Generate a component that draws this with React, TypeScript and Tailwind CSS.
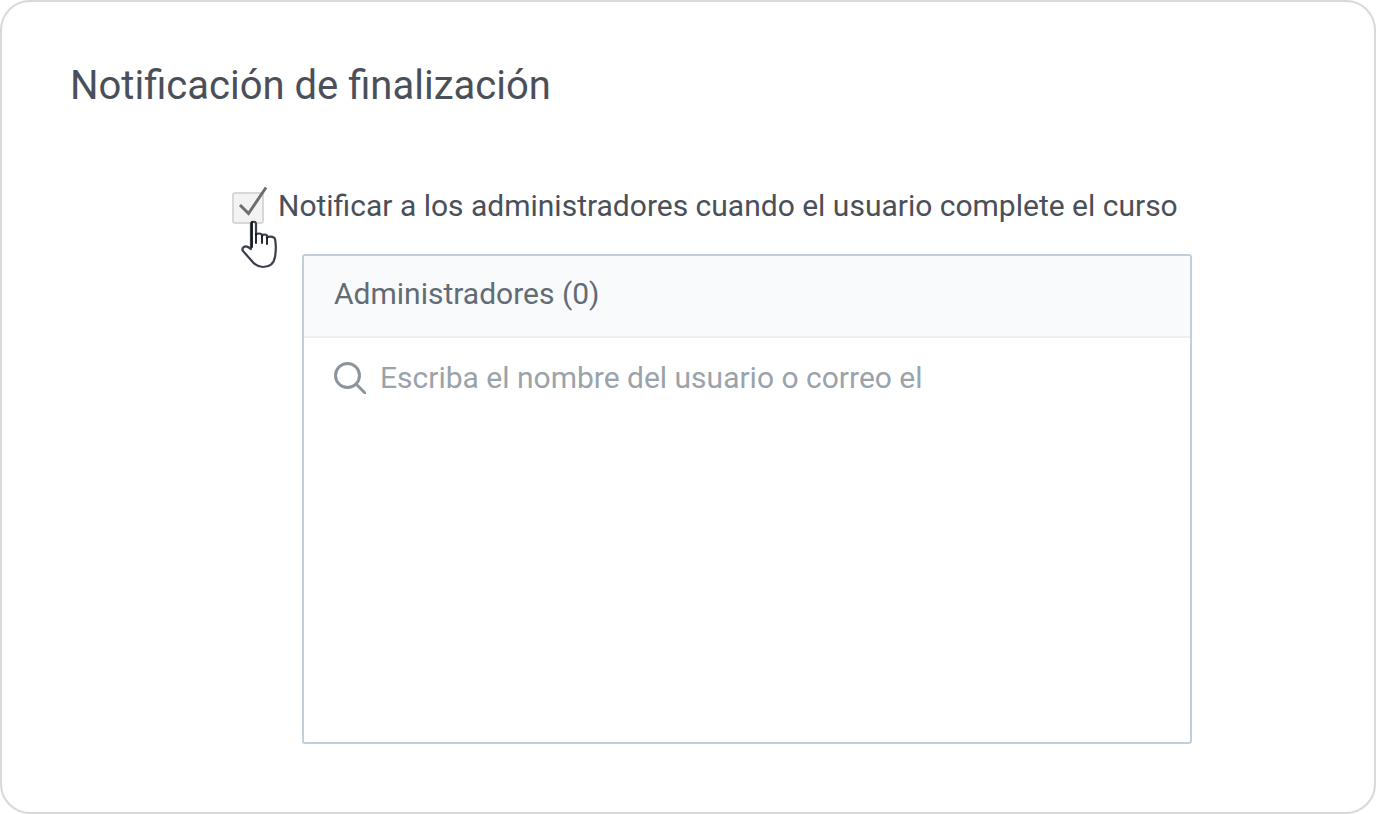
function HandCursor() {
  return (
    <svg width="38" height="50" viewBox="0 0 38 50" fill="none" className="absolute left-[238px] top-[218px]">
      <path
        d="M11 28V4c0-3 5-3 5 0v11c0-2 6-2 6 0v1c0-2 5-2 5 0v2c0-2 7-2 8 1 1 5 1 12 0 18-1 6-5 10-12 10-6 0-9-3-12-7l-8-9c-2-3 2-6 5-4l3 2"
        stroke="#3a3f4b"
        strokeWidth="2.200"
        strokeLinecap="round"
        strokeLinejoin="round"
        fill="#fff"
      />
      <path d="M12 2v25M16 14v9M22 16v7M27 18v6" stroke="#12141c" strokeWidth="1.800" strokeLinecap="round" />
    </svg>
  )
}

export default function App() {
  return (
    <div className="w-[1376px] h-[814px] bg-white font-['Roboto',sans-serif]">
      <div className="relative w-full h-full border-2 border-[#d9d9d9] rounded-[30px] pl-[68px] pt-[61px]">
        <h1 className="text-[40px] leading-[46px] font-normal text-[#4a505a]">Notificación de finalización</h1>

        <div className="flex flex-col ml-[162px] mt-[75px]">
          <label className="flex items-center gap-[14px] h-[44px]">
            <span className="relative w-[32px] h-[32px] mt-[3px] bg-[#f3f3f3] border-2 border-[#d8d8d8] rounded-[3px] shrink-0">
              <svg width="38" height="38" viewBox="0 0 38 38" fill="none" className="absolute left-[3px] top-[-12px]">
                <path d="M3 23l8.500 8.500L29 5.500" stroke="#6e6e6e" strokeWidth="3" />
              </svg>
            </span>
            <span className="text-[30px] leading-[44px] text-[#4a505a] whitespace-nowrap">
              Notificar a los administradores cuando el usuario complete el curso
            </span>
          </label>

          <div className="ml-[70px] mt-[26px] w-[890px] h-[490px] border-2 border-[#bfd0dc] rounded-[3px] flex flex-col">
            <div className="h-[82px] shrink-0 bg-[#f9fafc] border-b-2 border-[#eceeef] pl-[30px] pb-[4px] flex items-center">
              <span className="text-[30px] leading-[40px] text-[#636b75]">Administradores (0)</span>
            </div>
            <div className="flex items-center h-[80px] pl-[30px] gap-[14px]">
              <svg width="32" height="32" viewBox="0 0 32 32" fill="none" stroke="#8c959c" strokeWidth="3" className="shrink-0">
                <circle cx="13.500" cy="13.500" r="12" />
                <path d="M22.500 22.500l8.500 8.500" strokeLinecap="round" />
              </svg>
              <div className="whitespace-nowrap text-[30px] leading-[40px] text-[#9aa3ab]">
                Escriba el nombre del usuario o correo el
              </div>
            </div>
          </div>
        </div>

        <HandCursor />
      </div>
    </div>
  )
}
